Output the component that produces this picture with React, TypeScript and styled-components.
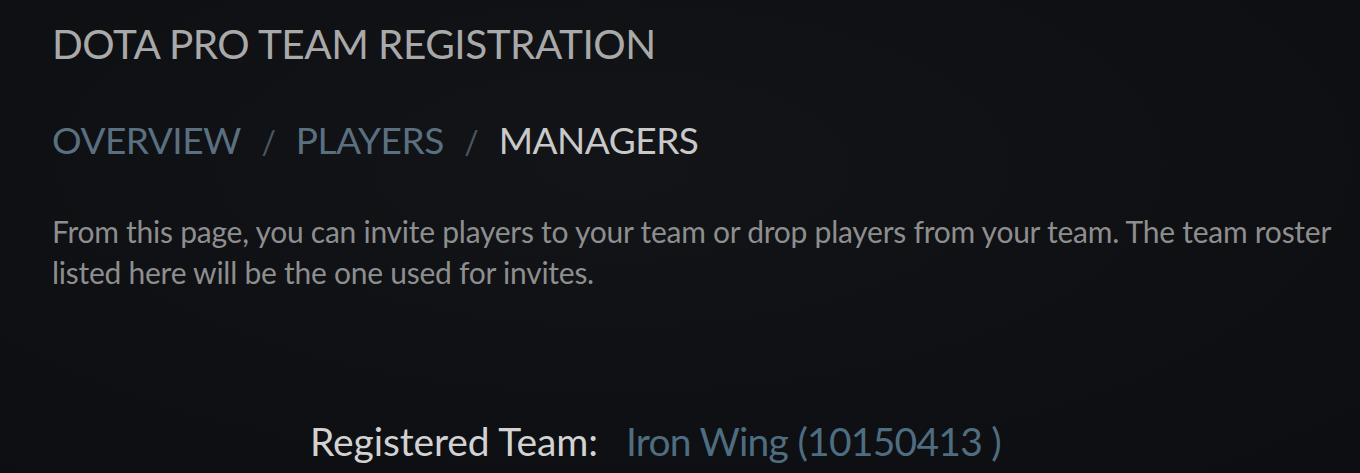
import React from "react"
import styled, { createGlobalStyle } from "styled-components"

const GlobalStyle = createGlobalStyle`
  html, body {
    margin: 0;
    padding: 0;
    background: #0e1013;
  }
`

const Page = styled.div`
  width: 1360px;
  height: 473px;
  box-sizing: border-box;
  padding: 21px 0 0 52px;
  background: radial-gradient(ellipse at 45% 35%, #121418 0%, #0e1013 60%, #0c0e11 100%);
  font-family: Lato, "Liberation Sans", sans-serif;
  overflow: hidden;
`

const Title = styled.h1`
  margin: 0;
  font-size: 40.5px;
  font-weight: 400;
  color: #a9a9a9;
  letter-spacing: -0.5px;
  line-height: 46px;
`

const Crumbs = styled.nav`
  display: flex;
  align-items: baseline;
  height: 46px;
  margin-top: 50px;
  font-size: 37px;
  line-height: 46px;
  letter-spacing: -0.5px;
`

const Crumb = styled.span<{ $active?: boolean }>`
  color: ${props => (props.$active ? "#c9c9c9" : "#5a7080")};
`

const Slash = styled.span`
  color: #4c5660;
  font-size: 32px;
  margin: 0 20.5px;
`

const Intro = styled.p`
  margin: 48px 0 0 0;
  width: 1300px;
  font-size: 30px;
  line-height: 41px;
  color: #8e8e8e;
  letter-spacing: -0.25px;
`

const TeamRow = styled.div`
  display: flex;
  align-items: baseline;
  gap: 28px;
  margin: 124px 0 0 258px;
  font-size: 39px;
  line-height: 48px;
`

const TeamLabel = styled.span`
  color: #d2d2d2;
  letter-spacing: -0.1px;
`

const TeamValue = styled.span`
  color: #4f6d80;
  letter-spacing: -0.75px;
`

const App: React.FC = () => {
  return (
    <>
      <GlobalStyle />
      <Page>
        <Title>DOTA PRO TEAM REGISTRATION</Title>
        <Crumbs>
          <Crumb>OVERVIEW</Crumb>
          <Slash>/</Slash>
          <Crumb>PLAYERS</Crumb>
          <Slash>/</Slash>
          <Crumb $active>MANAGERS</Crumb>
        </Crumbs>
        <Intro>
          From this page, you can invite players to your team or drop players from your team. The team roster
          listed here will be the one used for invites.
        </Intro>
        <TeamRow>
          <TeamLabel>Registered Team:</TeamLabel>
          <TeamValue>Iron Wing (10150413 )</TeamValue>
        </TeamRow>
      </Page>
    </>
  )
}

export default App
